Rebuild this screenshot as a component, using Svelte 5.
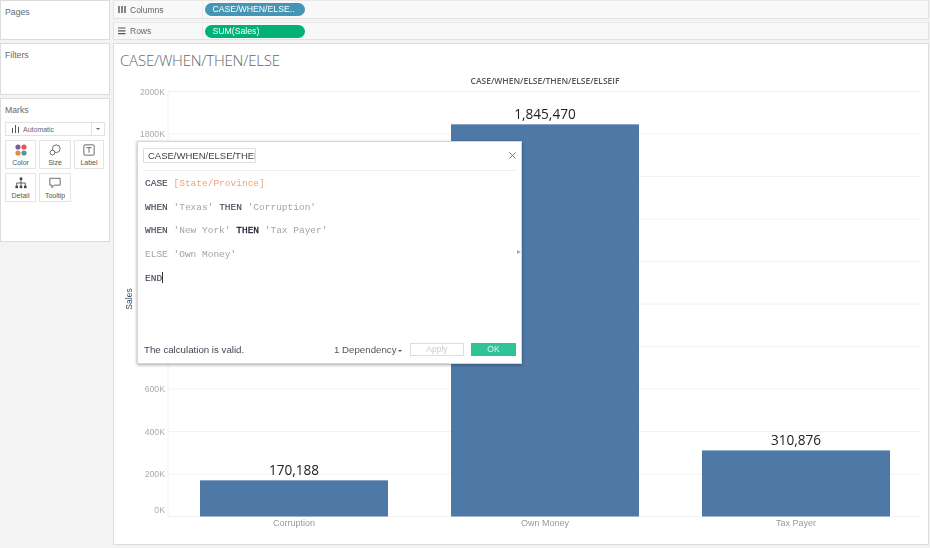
<script>
  const ticks = [0, 200, 400, 600, 800, 1000, 1200, 1400, 1600, 1800, 2000];
  const y0 = 472.5;
  const scale = 425 / 2000;
  const yOf = (k) => y0 - k * scale;
  const bars = [
    { name: 'Corruption', label: '170,188', x: 86, value: 170.188 },
    { name: 'Own Money', label: '1,845,470', x: 337, value: 1845.47 },
    { name: 'Tax Payer', label: '310,876', x: 588, value: 310.876 }
  ];
  const cards = [
    { name: 'Color', icon: 'color' },
    { name: 'Size', icon: 'size' },
    { name: 'Label', icon: 'label' },
    { name: 'Detail', icon: 'detail' },
    { name: 'Tooltip', icon: 'tooltip' }
  ];
</script>

<div class="page">
  <aside class="side">
    <section class="panel pages"><h3>Pages</h3></section>
    <section class="panel filters"><h3>Filters</h3></section>
    <section class="panel marks">
      <h3>Marks</h3>
      <div class="select">
        <svg class="bars-ic" width="7" height="8" viewBox="0 0 7 8"><path d="M0.5 3v5M3.5 0v8M6.5 2v6" stroke="#555" fill="none"/></svg>
        <span>Automatic</span>
        <i class="sel-arrow"></i>
      </div>
      <div class="cards">
        {#each cards as c}
          <div class="card">
            <svg width="12" height="12" viewBox="0 0 14 14">
              {#if c.icon === 'color'}
                <circle cx="3.5" cy="3.5" r="3" fill="#7c5c9c"/>
                <circle cx="10.5" cy="3.5" r="3" fill="#e0584f"/>
                <circle cx="3.5" cy="10.5" r="3" fill="#e08a4f"/>
                <circle cx="10.5" cy="10.5" r="3" fill="#4f9a94"/>
              {:else if c.icon === 'size'}
                <circle cx="8.5" cy="5.5" r="4.5" fill="none" stroke="#555"/>
                <circle cx="4" cy="10" r="2.8" fill="#fff" stroke="#555"/>
              {:else if c.icon === 'label'}
                <rect x="1" y="1" width="12" height="12" rx="1" fill="none" stroke="#555"/>
                <path d="M4 4.2h6M7 4.2v6" stroke="#555" fill="none"/>
              {:else if c.icon === 'detail'}
                <rect x="5.5" y="0.5" width="3" height="3" fill="#444"/>
                <rect x="0.5" y="10" width="3" height="3" fill="#444"/>
                <rect x="5.5" y="10" width="3" height="3" fill="#444"/>
                <rect x="10.5" y="10" width="3" height="3" fill="#444"/>
                <path d="M7 3.5v6.5M2 10V7h10v3" stroke="#444" fill="none"/>
              {:else}
                <path d="M1 1.5h12v8H6l-2.5 3v-3H1z" fill="none" stroke="#555"/>
              {/if}
            </svg>
            <span>{c.name}</span>
          </div>
        {/each}
      </div>
    </section>
  </aside>

  <main class="main">
    <div class="shelf first">
      <div class="shelf-name">
        <svg width="8" height="8" viewBox="0 0 8 8"><path d="M1 0v7M4 0v7M7 0v7" stroke="#555" stroke-width="1.4" fill="none"/></svg>
        <span>Columns</span>
      </div>
      <div class="pill blue">CASE/WHEN/ELSE..</div>
    </div>
    <div class="shelf">
      <div class="shelf-name">
        <svg width="8" height="8" viewBox="0 0 8 8"><path d="M0 1h7.5M0 3.8h7.5M0 6.6h7.5" stroke="#555" stroke-width="1.2" fill="none"/></svg>
        <span>Rows</span>
      </div>
      <div class="pill green">SUM(Sales)</div>
    </div>

    <section class="view">
      <h1>CASE/WHEN/THEN/ELSE</h1>
      <svg class="chart" width="815" height="500" viewBox="0 0 815 500">
        <text class="chart-title" x="431" y="40" text-anchor="middle">CASE/WHEN/ELSE/THEN/ELSE/ELSEIF</text>
        <path d="M54 47v426" stroke="#f0f0f0" fill="none"/>
        {#each ticks as t}
          <line x1="54" x2="806" y1={yOf(t)} y2={yOf(t)} stroke="#f2f2f2"/>
          <text class="tick" x="51" y={t === 0 ? 468.5 : yOf(t) + 3} text-anchor="end">{t}K</text>
        {/each}
        {#each bars as b}
          <rect x={b.x} y={yOf(b.value)} width="188" height={b.value * scale} fill="#4e79a7"/>
          <text class="val" x={b.x + 94} y={yOf(b.value) - 5} text-anchor="middle">{b.label}</text>
          <text class="cat" x={b.x + 94} y="482" text-anchor="middle">{b.name}</text>
        {/each}
        <text class="axis" transform="translate(18 255) rotate(-90)" text-anchor="middle">Sales</text>
      </svg>
    </section>

    <div class="dialog">
      <div class="dlg-head">
        <div class="name-box"><span>CASE/WHEN/ELSE/THEN/ELSE/ELSEIF</span></div>
        <svg class="close" width="7" height="7" viewBox="0 0 8 8"><path d="M0.5 0.5l7 7M7.5 0.5l-7 7" stroke="#666" fill="none"/></svg>
      </div>
      <div class="code">
        <div><b class="k">CASE</b> <span class="field">[State/Province]</span></div>
        <div><b class="k">WHEN</b> <span class="str">'Texas'</span> <b class="k">THEN</b> <span class="str">'Corruption'</span></div>
        <div><b class="k">WHEN</b> <span class="str">'New York'</span> <b class="k dark">THEN</b> <span class="str">'Tax Payer'</span></div>
        <div><span class="str">ELSE 'Own Money'</span></div>
        <div><b class="k">END</b><i class="caret"></i></div>
      </div>
      <i class="expander"></i>
      <div class="dlg-foot">
        <span class="valid">The calculation is valid.</span>
        <span class="dep">1 Dependency<i class="dep-arrow"></i></span>
        <button class="apply">Apply</button>
        <button class="ok">OK</button>
      </div>
    </div>
  </main>
</div>

<style>
  :global(body) {
    margin: 0;
    background: #f3f3f3;
  }
  .page {
    width: 930px;
    height: 548px;
    display: grid;
    grid-template-columns: 110px 816px;
    column-gap: 3px;
    font-family: "Liberation Sans", Arial, sans-serif;
    color: #555;
    overflow: hidden;
    filter: blur(0.35px);
  }
  .side {
    display: flex;
    flex-direction: column;
    gap: 3px;
    height: 242px;
  }
  .panel {
    box-sizing: border-box;
    background: #fff;
    border: 1px solid #dcdcdc;
    padding: 5px 4px 0;
  }
  .panel h3 {
    margin: 0;
    font-size: 8.7px;
    font-weight: 400;
    line-height: 12px;
    color: #667;
  }
  .pages { height: 40px; }
  .filters { height: 52px; }
  .marks { height: 144px; }
  .select {
    box-sizing: border-box;
    height: 14px;
    margin: 6px 0 4px;
    width: 100px;
    border: 1px solid #e2e2e2;
    display: flex;
    align-items: center;
    gap: 4px;
    padding-left: 6px;
    font-size: 7px;
    position: relative;
    color: #666;
  }
  .sel-arrow {
    position: absolute;
    right: 0;
    top: 0;
    bottom: 0;
    width: 12px;
    border-left: 1px solid #e2e2e2;
  }
  .sel-arrow::after {
    content: "";
    position: absolute;
    left: 4px;
    top: 5px;
    border: 2px solid transparent;
    border-top: 2.5px solid #666;
  }
  .cards {
    display: grid;
    grid-template-columns: 31px 32px 30px;
    gap: 4px 3px;
  }
  .card {
    box-sizing: border-box;
    height: 29px;
    border: 1px solid #e4e4e4;
    background: #fff;
    display: flex;
    flex-direction: column;
    align-items: center;
    gap: 3px;
    padding-top: 3px;
    font-size: 7px;
    color: #555;
  }
  .card span { line-height: 8px; }
  .main {
    position: relative;
    display: flex;
    flex-direction: column;
    gap: 3px;
    height: 545px;
  }
  .shelf {
    box-sizing: border-box;
    height: 18px;
    display: flex;
    align-items: center;
    background: #f8f8f8;
    border: 1px solid #e2e2e2;
    border-top-color: #e8e8e8;
  }
  .shelf.first { height: 19px; }
  .shelf-name {
    box-sizing: border-box;
    width: 89px;
    height: 100%;
    display: flex;
    align-items: center;
    gap: 4px;
    padding-left: 4px;
    font-size: 8.5px;
    color: #666;
    border-right: 1px solid #ececec;
  }
  .pill {
    margin-left: 2px;
    width: 100px;
    height: 13px;
    border-radius: 7px;
    color: #fff;
    font-size: 8.7px;
    line-height: 13px;
    padding-left: 7.5px;
    box-sizing: border-box;
    white-space: nowrap;
  }
  .blue { background: #4596b5; }
  .green { background: #00b17a; }
  .view {
    flex: 1;
    min-height: 0;
    box-sizing: border-box;
    background: #fff;
    border: 1px solid #dcdcdc;
    position: relative;
  }
  .view h1 {
    margin: 0;
    padding: 8px 0 0 6px;
    font-size: 15px;
    line-height: 16px;
    font-weight: 300;
    color: #666;
    font-family: "Open Sans", "Liberation Sans", sans-serif;
    letter-spacing: -0.2px;
  }
  .chart {
    position: absolute;
    left: 0;
    top: 0;
  }
  .chart-title {
    font-size: 8.5px;
    font-weight: 600;
    fill: #555;
    font-family: "Open Sans", sans-serif;
  }
  .tick { font-size: 8.7px; fill: #aaa; }
  .cat { font-size: 9px; fill: #999; }
  .axis { font-size: 8.5px; fill: #34506e; font-weight: 400; }
  .val {
    font-size: 13.6px;
    fill: #222;
    font-family: "Open Sans", sans-serif;
    font-weight: 500;
  }
  .dialog {
    position: absolute;
    left: 24px;
    top: 141px;
    width: 385px;
    height: 223px;
    box-sizing: border-box;
    background: #fff;
    border: 1px solid #d6d6d6;
    box-shadow: 0 1px 3px rgba(0, 0, 0, 0.35);
    padding: 6px 5px 0;
    display: flex;
    flex-direction: column;
  }
  .dlg-head {
    height: 22px;
    flex: none;
    border-bottom: 1px solid #eee;
    display: flex;
    align-items: flex-start;
    justify-content: space-between;
  }
  .name-box {
    box-sizing: border-box;
    width: 113px;
    height: 15px;
    border: 1px solid #ddd;
    border-radius: 1px;
    overflow: hidden;
    white-space: nowrap;
    font-size: 9.5px;
    line-height: 13px;
    padding-left: 4px;
    color: #444;
  }
  .close { margin: 4px 0 0 0; }
  .code {
    flex: 1;
    padding: 5px 2px 0;
    font-family: "Liberation Mono", "Courier New", monospace;
    font-size: 9.5px;
    color: #888;
  }
  .code > div { height: 23.7px; line-height: 16px; white-space: pre; }
  .code b { font-weight: 400; color: #445; -webkit-text-stroke: 0.1px #445; }
  .code .dark { color: #223; -webkit-text-stroke: 0.3px #223; }
  .field { color: #f0a27c; }
  .str { color: #a4a4a4; }
  .caret {
    display: inline-block;
    width: 1px;
    height: 11px;
    background: #333;
    vertical-align: -2px;
  }
  .expander {
    position: absolute;
    right: -2px;
    top: 108px;
    border: 2.5px solid transparent;
    border-left: 4px solid #aaa;
  }
  .dlg-foot {
    height: 20px;
    flex: none;
    display: flex;
    align-items: flex-start;
    font-size: 9.7px;
    color: #555;
    padding-left: 1px;
  }
  .valid { line-height: 13px; width: 190px; color: #445; }
  .dep { width: 76px; line-height: 13px; white-space: nowrap; }
  .dep-arrow {
    display: inline-block;
    margin-left: 2px;
    vertical-align: 1px;
    border: 2px solid transparent;
    border-top: 2.5px solid #555;
    border-bottom: 0;
  }
  button {
    box-sizing: border-box;
    height: 13px;
    padding: 0;
    font: inherit;
    font-size: 8.5px;
    line-height: 11px;
    border-radius: 0;
  }
  .apply {
    width: 54px;
    background: #fff;
    border: 1px solid #ddd;
    color: #ccc;
  }
  .ok {
    width: 45px;
    margin-left: 7px;
    background: #2dc597;
    border: 0;
    color: #dff5ec;
  }
</style>
